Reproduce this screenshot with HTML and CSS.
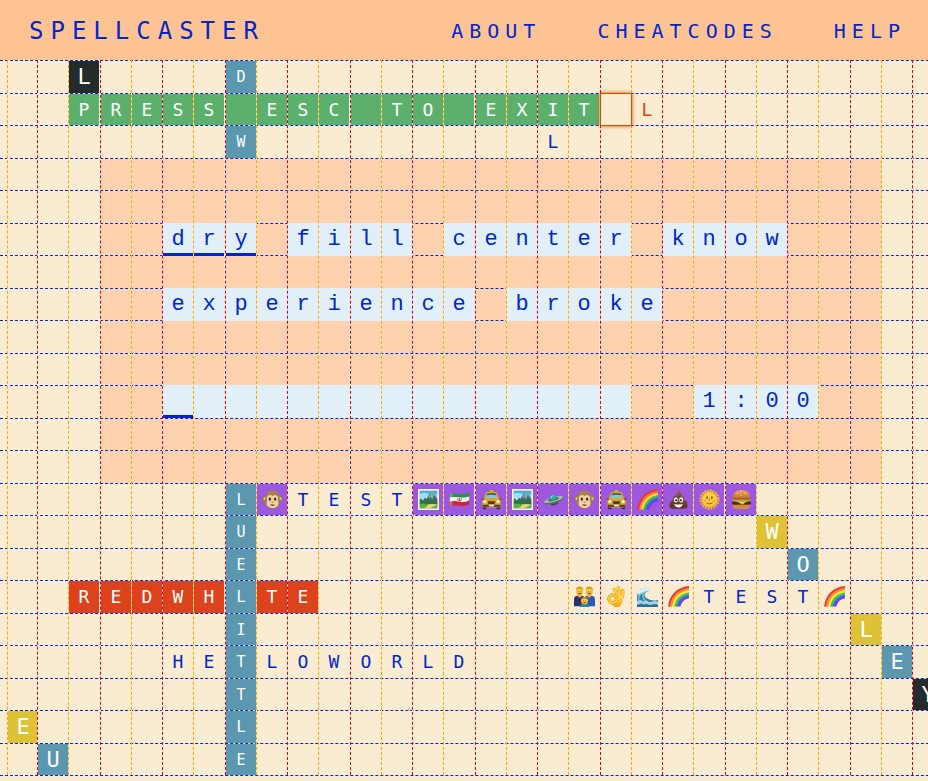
FILE: index.html
```html
<!DOCTYPE html>
<html lang="en">
<head>
<meta charset="utf-8">
<meta name="viewport" content="width=device-width, initial-scale=1">
<title>Spellcaster</title>
<link rel="stylesheet" href="styles.css">
</head>
<body>
<svg class="defs" width="0" height="0" aria-hidden="true">
  <defs>
    <linearGradient id="sea" x1="0" y1="0" x2="0" y2="1"><stop offset="0" stop-color="#2aa8e2"/><stop offset="0.5" stop-color="#c7ecf2"/><stop offset="1" stop-color="#3bb9b5"/></linearGradient>
    <linearGradient id="gold" x1="0" y1="0" x2="0" y2="1"><stop offset="0" stop-color="#ffda51"/><stop offset="1" stop-color="#f2a51d"/></linearGradient>
    <linearGradient id="bun" x1="0" y1="0" x2="0" y2="1"><stop offset="0" stop-color="#eda65e"/><stop offset="1" stop-color="#c46b2c"/></linearGradient>
    <linearGradient id="choc" x1="0" y1="0" x2="0" y2="1"><stop offset="0" stop-color="#97644d"/><stop offset="1" stop-color="#5b3023"/></linearGradient>
    <symbol id="monkey" viewBox="0 0 24 24">
      <circle cx="3.500" cy="11" r="3.300" fill="#9a754c"/><circle cx="20.500" cy="11" r="3.300" fill="#9a754c"/>
      <circle cx="3.500" cy="11" r="1.900" fill="#e8bf94"/><circle cx="20.500" cy="11" r="1.900" fill="#e8bf94"/>
      <path d="M12 1.500C16.800 1.500 20 5 20 10.500c1 2 1.300 4.500 0 7-1.800 3.500-4.500 5-8 5s-6.200-1.500-8-5c-1.300-2.500-1-5 0-7C4 5 7.200 1.500 12 1.500z" fill="#a3814f"/>
      <path d="M12 8C9 5.500 5.600 7.300 5.600 10.800c0 1.500.5 2.300.2 3.200C3.800 19 8 21.800 12 21.800s8.200-2.800 6.200-7.800c-.3-.9.200-1.700.2-3.200C18.400 7.300 15 5.500 12 8z" fill="#efd0a3"/>
      <ellipse cx="9" cy="11.500" rx="1.300" ry="1.900" fill="#2d2318"/><ellipse cx="15" cy="11.500" rx="1.300" ry="1.900" fill="#2d2318"/>
      <path d="M10.500 14.500h3l-1.500 1.200z" fill="#7b4e31"/><path d="M9.500 17.500q2.500.8 5 0-.5 2-2.500 2t-2.500-2z" fill="#6b2a20"/>
    </symbol>
    <symbol id="picture" viewBox="0 0 24 24">
      <path d="M0 0h24v24H0z" fill="#f2f1e6"/><path d="M2 2h20v20H2z" fill="url(#sea)"/>
      <path d="M2 6q4-3 8-1 2 2 4 1v4H2z" fill="#9be1f6"/>
      <path d="M4 15l4-5 2 1 4-7 2 2 2-1 4 6v8H5z" fill="#3b6676"/><path d="M14 4l-2 7 3-2 1 4 2-6 3 5-3-7-2 1z" fill="#8cab98"/>
      <path d="M2 11q2-1 4 3l16-1v4l-8 1-12-1z" fill="#34713b"/><path d="M2 17q5-1 8 1l12-1v5H2z" fill="#5eac39"/>
      <path d="M10 18q6-2 12 0l-8 4H5q8-2 5-4z" fill="#e4d27e"/>
    </symbol>
    <symbol id="flag" viewBox="0 0 24 24">
      <path d="M1 5.500q5-1.500 11 0t11-1.500v5q-5 2-11 1T1 10z" fill="#28934a"/>
      <path d="M1 9.500q5-1 11 0t11-1v5.500q-5 2-11 1T1 15z" fill="#f2f2ed"/>
      <path d="M1 14.500q5-1.500 11 0t11-1.500v5q-5 2-11 1T1 19.500z" fill="#cd2638"/>
      <path d="M10 10.500v1q0 2 2 2t2-2v-1M12 10v4" fill="none" stroke="#d53d40" stroke-width="1"/>
      <path d="M1 5.500l3-.7v14L1 19.500z" fill="#fff" opacity=".25"/>
    </symbol>
    <symbol id="taxi" viewBox="0 0 24 24">
      <rect x="8.500" y="1" width="7" height="3" rx="1" fill="#725d2e"/><rect x="9.500" y="1.500" width="5" height="1.500" fill="#f7d157"/>
      <rect x="2" y="18" width="4.500" height="5" rx="1.500" fill="#302d2d"/><rect x="17.500" y="18" width="4.500" height="5" rx="1.500" fill="#302d2d"/>
      <path d="M6 3.500q6-1.300 12 0 1.500 3 2.500 7l2 2.500v7q-1 1-2 1h-17q-1 0-2-1v-7l2-2.500q1-4 2.500-7z" fill="#dda324"/>
      <path d="M7 5q5-1 10 0l2 6q-7-1.500-14 0z" fill="#8ac5ce"/><path d="M7 5q5-1 10 0l.7 2q-6-1-11.400 0z" fill="#37616b"/>
      <circle cx="4.500" cy="14.500" r="1.800" fill="#fff1af"/><circle cx="19.500" cy="14.500" r="1.800" fill="#fff1af"/>
      <path d="M7.500 14h9l-1 3h-7z" fill="#4d4021"/><path d="M2 18h20v2.500H2z" fill="#4c442e"/><path d="M9 18h6v2H9z" fill="#f4ead0"/>
      <path d="M.3 10.500h3v1.800h-3zM20.700 10.500h3v1.800h-3z" fill="#725d2e"/>
    </symbol>
    <symbol id="ufo" viewBox="0 0 24 24">
      <g transform="rotate(-15 12 12)"><path d="M5 14h14l-4 4.500H9z" fill="#3d4847"/><ellipse cx="12" cy="13" rx="12.300" ry="3.600" fill="#626e6e"/><ellipse cx="12" cy="12" rx="11.500" ry="2.700" fill="#a9b2b1"/><ellipse cx="12" cy="11.500" rx="6" ry="1.800" fill="#505d5c"/><path d="M8 11.500q0-5 4-5t4 5q-4 1.500-8 0z" fill="#22b5a2"/><path d="M9.500 9.500q1-2 3-1.800" stroke="#a0f3dc" fill="none"/></g>
    </symbol>
    <symbol id="rainbow" viewBox="0 0 24 24">
      <g fill="none" stroke-width="2.500"><path d="M1.300 23.500Q4 4 24 1.300" stroke="#e9363c"/><path d="M3.700 23.500Q6.500 6 24 3.700" stroke="#f98c20"/><path d="M6 23.500Q9 8 24 6" stroke="#fbe32e"/><path d="M8.300 23.500Q11 10.500 24 8.300" stroke="#40c932"/><path d="M10.600 23.500Q13.500 12.500 24 10.600" stroke="#2375ec"/><path d="M12.800 23.500Q15 14.500 24 12.800" stroke="#8237dc"/></g>
    </symbol>
    <symbol id="poop" viewBox="0 0 24 24">
      <path d="M11 1.500q5 2 4.500 6 3.500 1 3 5 4 1 3.500 5 2 5-4 5H6q-6 0-4-5-.5-3 3.500-5-.5-4 3.500-5.500Q11 5.500 11 1.500z" fill="url(#choc)"/>
      <path d="M7 9q5 1 8-1.500M4.500 15q4 2 7 1.500" stroke="#4c261b" fill="none" opacity=".6"/>
      <ellipse cx="9" cy="12.500" rx="2.300" ry="3" fill="#fff"/><ellipse cx="15" cy="12.500" rx="2.300" ry="3" fill="#fff"/><circle cx="9.300" cy="12.800" r="1.200" fill="#17110e"/><circle cx="14.700" cy="12.800" r="1.200" fill="#17110e"/>
      <path d="M7 17q5 1.500 10 0-1.500 4-5 4t-5-4z" fill="#fff"/>
    </symbol>
    <symbol id="sun" viewBox="0 0 24 24">
      <circle cx="12" cy="12" r="10.300" fill="none" stroke="#f5b72e" stroke-width="2.600" stroke-dasharray="2 1.240"/>
      <circle cx="12" cy="12" r="9.300" fill="#f8b62d"/><circle cx="12" cy="11.500" r="7.500" fill="#ffd044"/>
      <ellipse cx="9.300" cy="10" rx="1" ry="1.600" fill="#895019"/><ellipse cx="14.700" cy="10" rx="1" ry="1.600" fill="#895019"/>
      <path d="M12 11v2.500M8.500 15.500q3.500 3 7 0" stroke="#a4581b" stroke-width="1.200" fill="none"/>
      <circle cx="7" cy="13.500" r="1.500" fill="#f58b35" opacity=".6"/><circle cx="17" cy="13.500" r="1.500" fill="#f58b35" opacity=".6"/>
    </symbol>
    <symbol id="burger" viewBox="0 0 24 24">
      <path d="M2 17h20v2q-1 4-5 4H7q-4 0-5-4z" fill="#d58a46"/>
      <path d="M2 10Q2 1 12 1t10 9q0 1-1 1H3q-1 0-1-1z" fill="url(#bun)"/>
      <rect x="1" y="14" width="22" height="4" rx="2" fill="#542b1d"/>
      <path d="M1 12.500q2-3 4-2l14 0q3-.5 4 2l-2 1.500-3-1-3 1.500-3-1.500-3 1.500-3-1.500-3 1z" fill="#8bc735"/>
      <path d="M2 10.500h20v1.500H2z" fill="#c13b28"/><path d="M3 14h18l-5 1.500-3 2.500-4-2.500z" fill="#f7c83a"/>
      <path d="M7 5h1M11 3.500h1M15 5h1M11 7h1" stroke="#fbe2b5" stroke-linecap="round"/>
    </symbol>
    <symbol id="family" viewBox="0 0 24 24">
      <path d="M0 23V15q0-4 4-4h5q3 0 3 4v8z" fill="#313066"/><path d="M12 23v-8q0-4 3-4h5q4 0 4 4v8z" fill="#285bbd"/>
      <path d="M4.500 9h4v3l-2 1.500-2-1.500zM15.500 9h4v3l-2 1.500-2-1.500z" fill="#eeb128"/>
      <ellipse cx="6.500" cy="6" rx="4" ry="5" fill="url(#gold)"/><ellipse cx="17.500" cy="6" rx="4" ry="5" fill="url(#gold)"/>
      <path d="M2.300 5Q2 .5 6.500.5t4.200 4.500L9.500 3.500h-6zM13.300 5Q13 .5 17.500.5t4.200 4.500l-1.200-1.500h-6z" fill="#dba023"/>
      <path d="M5 6h.6M7.500 6H8M16 6h.6M18.500 6h.6M5 8.500h3M16 8.500h3" stroke="#66451c"/>
      <path d="M6.500 24q0-4 5.500-4t5.500 4z" fill="#1689b8"/><circle cx="12" cy="17" r="4" fill="url(#gold)"/><path d="M8 16q0-3.500 4-3.500t4 3.500l-2-1.500h-4z" fill="#bd841d"/><path d="M10.300 17h.6M13 17h.6M11 19h2" stroke="#66451c"/>
    </symbol>
    <symbol id="okay" viewBox="0 0 24 24">
      <g fill="none" stroke-linecap="round"><path d="M13 13Q13 8 9.500 4M15.500 14Q16 8 14 2M17.500 15Q20 10 19 5" stroke="#dd961c" stroke-width="3.800"/><path d="M13 13Q13 8 9.500 4M15.500 14Q16 8 14 2M17.500 15Q20 10 19 5" stroke="#ffcf48" stroke-width="2.800"/></g>
      <path d="M11 12q5-3 8 1 1.500 4-1.500 8l-2 3h-6q-1-2-4-4z" fill="url(#gold)"/>
      <path d="M11.500 12Q7 9 4.500 11.500T4.500 18q3 3 8-.5" fill="none" stroke="#dd961c" stroke-width="3.800" stroke-linecap="round"/>
      <path d="M11.500 12Q7 9 4.500 11.500T4.500 18q3 3 8-.5" fill="none" stroke="#fdc83e" stroke-width="2.800" stroke-linecap="round"/>
    </symbol>
    <symbol id="wave" viewBox="0 0 24 24">
      <path d="M0 23V13Q0 3 9 2q5 0 6 5-3-2-5 0-3 4 1 7 6 4 13 2v7z" fill="#347ca5"/>
      <path d="M2 21q-2-15 9-17-5 4-4 9 2 6 11 7" fill="none" stroke="#78bdd1" stroke-width="2"/>
      <path d="M1 9q-1-4 3-5 1-3 5-2 4-1 6 4l-2 1-2-2-2 2-2-1-1 3-2-1-1 2z" fill="#d7f0f2"/>
      <path d="M0 18q4-4 7 0 4-3 7 1 5-3 10-1v3q-5-1-9 1-4-3-7-1-4-2-8 0z" fill="#a4d6df"/>
      <path d="M0 22h24v2H0z" fill="#2b6c96"/>
    </symbol>
  </defs>
</svg>
<header class="site-header">
  <a class="brand" href="#">SPELLCASTER</a>
  <nav class="site-nav">
    <a href="#about">ABOUT</a>
    <a href="#cheatcodes">CHEATCODES</a>
    <a href="#help">HELP</a>
  </nav>
</header>
<main class="board-view">
  <div class="board" id="board">
    <div class="panel"></div>
    <div class="cursor"></div>
  </div>
</main>
<script src="board.js"></script>
</body>
</html>
```

FILE: styles.css
```css
:root {
  --blue: #0026cc;
  --cream: #faecd0;
  --white: #ffffff;
  --peach: #fed1af;
}

* { box-sizing: border-box; }

body {
  margin: 0;
  background: var(--cream);
  color: var(--blue);
  font-family: "DejaVu Sans Mono", monospace;
}

a { color: inherit; text-decoration: none; }

.defs { position: absolute; }

.site-header {
  display: flex;
  align-items: center;
  justify-content: space-between;
  height: 60px;
  padding: 2px 22px 0 29px;
  background: #fec393;
}

.brand { font-size: 24px; letter-spacing: 7px; }

.site-nav {
  display: flex;
  gap: 56px;
  font-size: 20px;
  letter-spacing: 6px;
}

.board-view { overflow: hidden; }

.board {
  display: grid;
  grid-template-columns: 7px 30px 31px 32px repeat(16, 31px 31px 31px 32px);
  grid-template-rows: repeat(11, 33px 32px) 1px;
  width: max-content;
}

.panel {
  grid-area: 4 / 5 / 14 / 30;
  background: var(--peach);
}

.rule-h {
  grid-column: 1 / -1;
  z-index: 2;
  height: 1px;
  background: var(--cream);
  border-top: 1px dashed var(--blue);
}

.rule-v {
  grid-row: 1 / 23;
  z-index: 4;
  width: 1px;
  background: var(--cream);
  border-left: 1px dashed #ffa500;
}

.rule-v.red { border-left-color: #cc0033; }
.rule-v.wide { box-shadow: -1px 0 var(--cream); }

.tile {
  display: flex;
  align-items: center;
  justify-content: center;
  z-index: 1;
  width: 31px;
  padding-left: 1px;
  padding-top: 1px;
  font-size: 18px;
  line-height: 24px;
}

.icon { padding-top: 0; }
.icon svg { display: block; width: 21px; height: 21px; }

.green, .red-tile, .teal, .black, .gold { color: var(--white); }
.green { background: #5bb06c; }
.red-tile { background: #dc421c; }
.teal { background: #5b98af; }
.black { background: #242c2b; }
.gold { background: #dec235; }
.purple { background: #9c58df; }
.orange-text { color: #dc421c; }
.small { font-size: 15px; }
.large { font-size: 22px; }

.light {
  z-index: 3;
  height: 33px;
  padding-top: 0;
  background: #e1eff9;
  font-family: "Liberation Mono", monospace;
  font-size: 22px;
}

.active { box-shadow: inset 0 -3px var(--blue); }

.cursor {
  grid-area: 2 / 21;
  z-index: 5;
  width: 32px;
  height: 33px;
  border: 1px solid #cc5200;
  box-shadow: 0 0 4px #cc5200;
}
```

FILE: board.js
```js
const board = document.getElementById('board');
const FIRST_COLUMN = 2;
const LAST_COLUMN = 68;
const ROWS = 22;

function add(className, row, column) {
  const element = document.createElement('div');
  element.className = className;
  if (row) element.style.gridRowStart = row;
  if (column) element.style.gridColumnStart = column;
  board.append(element);
  return element;
}

// Row, column, letters, style, and "down" when not across.
const words = [
  [1, 4, 'L', 'black large'],
  [2, 4, 'PRESS ESC TO EXIT', 'green'],
  [1, 9, 'D', 'teal small'],
  [3, 9, 'W', 'teal small'],
  [2, 22, 'L', 'orange-text'],
  [3, 19, 'L', ''],
  [6, 7, 'dry', 'light active'],
  [6, 11, 'fill', 'light'],
  [6, 16, 'center', 'light'],
  [6, 23, 'know', 'light'],
  [8, 7, 'experience', 'light'],
  [8, 18, 'broke', 'light'],
  [11, 7, ' ', 'light active'],
  [11, 8, ' '.repeat(14), 'light'],
  [11, 24, '1:00', 'light'],
  [14, 9, 'LUELITTLE', 'teal small', 'down'],
  [14, 11, 'TEST', ''],
  [17, 4, 'REDWH', 'red-tile'],
  [17, 10, 'TE', 'red-tile'],
  [17, 24, 'TEST', ''],
  [19, 7, 'HE', ''],
  [19, 10, 'LOWORLD', ''],
  [15, 26, 'W', 'gold large'],
  [16, 27, 'O', 'teal large'],
  [18, 29, 'L', 'gold large'],
  [19, 30, 'E', 'teal large'],
  [20, 31, 'Y', 'black large'],
  [21, 2, 'E', 'gold large'],
  [22, 3, 'U', 'teal large']
];

for (const [row, column, text, style, direction] of words) {
  [...text].forEach((letter, i) => {
    const down = direction === 'down';
    add('tile ' + style, row + (down ? i : 0), column + (down ? 0 : i)).textContent = letter;
  });
}

const icons = [
  [14, 10, ['monkey'], 'purple'],
  [14, 15, ['picture', 'flag', 'taxi', 'picture', 'ufo', 'monkey', 'taxi', 'rainbow', 'poop', 'sun', 'burger'], 'purple'],
  [17, 20, ['family', 'okay', 'wave', 'rainbow'], ''],
  [17, 28, ['rainbow'], '']
];

for (const [row, column, names, style] of icons) {
  names.forEach((name, i) => {
    add('tile icon ' + style, row, column + i).innerHTML =
      `<svg role="img" aria-label="${name}"><use href="#${name}"/></svg>`;
  });
}

for (let row = 1; row <= ROWS + 1; row++) add('rule-h', row);

for (let column = FIRST_COLUMN; column <= LAST_COLUMN; column++) {
  const red = column % 2 ? ' red' : '';
  const wide = column % 4 === 1 ? ' wide' : '';
  add('rule-v' + red + wide, 0, column);
}
```
